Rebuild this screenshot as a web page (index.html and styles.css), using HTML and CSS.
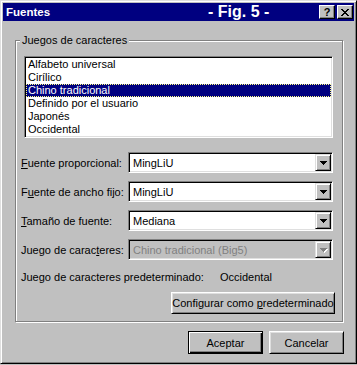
FILE: index.html
```html
<!DOCTYPE html>
<html>
<head>
  <title>Fuentes</title>
  <meta charset="utf-8">
  <link rel="stylesheet" href="styles.css">
</head>
<body>
  <div class="window">
    <div class="titlebar">
      <span class="caption">Fuentes</span>
      <span class="fig">- Fig. 5 -</span>
      <div class="title-buttons">
        <button class="tbtn">?</button>
        <button class="tbtn">
          <svg width="8" height="7" shape-rendering="crispEdges">
            <path d="M0 0h2v1h-2zM6 0h2v1h-2zM1 1h2v1h-2zM5 1h2v1h-2zM2 2h4v1h-4zM3 3h2v1h-2zM2 4h4v1h-4zM1 5h2v1h-2zM5 5h2v1h-2zM0 6h2v1h-2zM6 6h2v1h-2z"/>
          </svg>
        </button>
      </div>
    </div>

    <div class="content">
      <div class="group">
        <div class="group-title">Juegos de caracteres</div>
        <ul class="listbox">
          <li>Alfabeto universal</li>
          <li>Cirílico</li>
          <li class="selected">Chino tradicional</li>
          <li>Definido por el usuario</li>
          <li>Japonés</li>
          <li>Occidental</li>
        </ul>

        <div class="fields">
          <div class="field">
            <label><u>F</u>uente proporcional:</label>
            <div class="combo"><span>MingLiU</span><span class="drop"><svg width="7" height="4" shape-rendering="crispEdges"><path d="M0 0h7v1h-1v1h-1v1h-1v1h-1v-1h-1v-1h-1v-1h-1z"/></svg></span></div>
          </div>
          <div class="field">
            <label>F<u>u</u>ente de ancho fijo:</label>
            <div class="combo"><span>MingLiU</span><span class="drop"><svg width="7" height="4" shape-rendering="crispEdges"><path d="M0 0h7v1h-1v1h-1v1h-1v1h-1v-1h-1v-1h-1v-1h-1z"/></svg></span></div>
          </div>
          <div class="field">
            <label><u>T</u>amaño de fuente:</label>
            <div class="combo"><span>Mediana</span><span class="drop"><svg width="7" height="4" shape-rendering="crispEdges"><path d="M0 0h7v1h-1v1h-1v1h-1v1h-1v-1h-1v-1h-1v-1h-1z"/></svg></span></div>
          </div>
          <div class="field">
            <label>Juego de carac<u>t</u>eres:</label>
            <div class="combo disabled"><span>Chino tradicional (Big5)</span><span class="drop"><svg width="8" height="5" shape-rendering="crispEdges"><path class="shade" d="M1 1h7v1h-1v1h-1v1h-1v1h-1v-1h-1v-1h-1v-1h-1z"/><path d="M0 0h7v1h-1v1h-1v1h-1v1h-1v-1h-1v-1h-1v-1h-1z"/></svg></span></div>
          </div>
        </div>

        <div class="default-row">
          <span class="default-label">Juego de caracteres predeterminado:</span>
          <span>Occidental</span>
        </div>

        <div class="set-default">
          <button class="btn btn-wide">Configurar como <u>p</u>redeterminado</button>
        </div>
      </div>

      <div class="actions">
        <button class="btn btn-default">Aceptar</button>
        <button class="btn">Cancelar</button>
      </div>
    </div>
  </div>
</body>
</html>
```

FILE: styles.css
```css
* {
  box-sizing: border-box;
  margin: 0;
  padding: 0;
}

body {
  background-color: #c0c0c0;
  font-family: "Liberation Sans", Arial, sans-serif;
  font-size: 11px;
  color: #000;
}

.window {
  width: 357px;
  height: 364px;
  padding: 2px;
  border: 1px solid;
  border-color: #dfdfdf #000 #000 #dfdfdf;
  box-shadow: inset 1px 1px #fff, inset -1px -1px #808080;
}

/* barra de título */
.titlebar {
  height: 18px;
  display: flex;
  align-items: center;
  padding: 0 1px 0 3px;
  background-color: #000080;
  color: #fff;
}

.caption {
  width: 202px;
  font-size: 11.5px;
  font-weight: bold;
}

.fig {
  font-size: 16px;
  font-weight: bold;
  line-height: 18px;
}

.title-buttons {
  margin-left: auto;
  display: flex;
  gap: 2px;
}

.tbtn {
  width: 16px;
  height: 14px;
  display: flex;
  align-items: center;
  justify-content: center;
  background-color: #c0c0c0;
  border: 1px solid;
  border-color: #fff #000 #000 #fff;
  box-shadow: inset -1px -1px #808080;
  font-family: "Liberation Sans", Arial, sans-serif;
  font-size: 11px;
  font-weight: bold;
  color: #000;
}

/* contenido */
.content {
  padding: 19px 10px 0 12px;
}

.group {
  margin-right: 1px;
  padding: 0 9px 7px 5px;
  border: 1px solid #808080;
  box-shadow: inset 1px 1px #fff, 1px 1px #fff;
}

.group-title {
  width: fit-content;
  margin: -7px 0 0 -1px;
  padding: 0 2px;
  line-height: 13px;
  background-color: #c0c0c0;
}

.listbox {
  list-style: none;
  height: 82px;
  margin: 9px 0 0 3px;
  padding: 1px;
  background-color: #fff;
  border: 1px solid;
  border-color: #808080 #fff #fff #808080;
  box-shadow: inset 1px 1px #000, inset -1px -1px #dfdfdf;
}

.listbox li {
  height: 13px;
  line-height: 13px;
  padding-left: 2px;
}

.listbox li.selected {
  background-color: #000080;
  color: #fff;
  outline: 1px dotted #ffff80;
  outline-offset: -1px;
}

.fields {
  display: grid;
  row-gap: 8px;
  margin-top: 14px;
}

.field {
  display: flex;
  align-items: center;
  height: 21px;
}

.field label {
  width: 107px;
}

.combo {
  flex: 1;
  height: 21px;
  display: flex;
  align-items: center;
  justify-content: space-between;
  padding: 2px 1px 2px 4px;
  background-color: #fff;
  border: 1px solid;
  border-color: #808080 #fff #fff #808080;
  box-shadow: inset 1px 1px #000, inset -1px -1px #dfdfdf;
}

.drop {
  width: 16px;
  height: 17px;
  display: flex;
  align-items: center;
  justify-content: center;
  background-color: #c0c0c0;
  border: 1px solid;
  border-color: #dfdfdf #000 #000 #dfdfdf;
  box-shadow: inset 1px 1px #fff, inset -1px -1px #808080;
}

.drop svg {
  fill: #000;
}

.combo.disabled {
  background-color: #c0c0c0;
  color: #808080;
}

.combo.disabled svg {
  fill: #808080;
  margin: 1px 0 0 1px;
}

.combo.disabled .shade {
  fill: #fff;
}

.default-row {
  display: flex;
  margin-top: 11px;
  line-height: 13px;
}

.default-label {
  width: 199px;
}

.set-default {
  display: flex;
  justify-content: flex-end;
  margin: 8px -2px 0 0;
}

/* botones */
.btn {
  width: 75px;
  height: 23px;
  background-color: #c0c0c0;
  border: 1px solid;
  border-color: #fff #000 #000 #fff;
  box-shadow: inset 1px 1px #dfdfdf, inset -1px -1px #808080;
  font-family: "Liberation Sans", Arial, sans-serif;
  font-size: 11px;
  color: #000;
}

.btn-wide {
  width: 164px;
  height: 22px;
}

.btn-default {
  border-color: #000;
  box-shadow: inset 1px 1px #fff, inset -1px -1px #000, inset -2px -2px #808080;
}

.actions {
  display: flex;
  justify-content: flex-end;
  gap: 6px;
  margin-top: 9px;
}
```
